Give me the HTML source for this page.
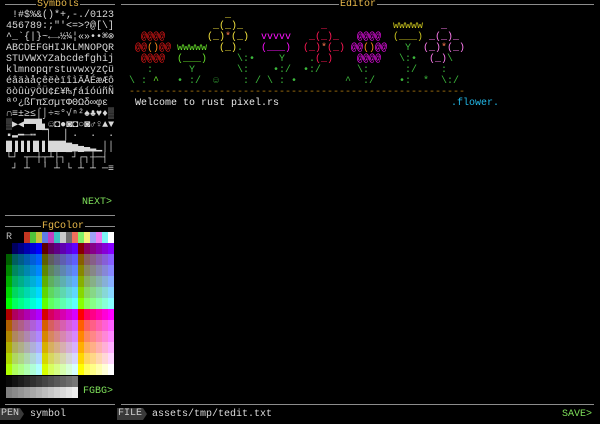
<!DOCTYPE html>
<html><head><meta charset="utf-8"><style>
html,body{margin:0;padding:0;background:#000;width:600px;height:424px;overflow:hidden;position:relative;font-family:"Liberation Mono","DejaVu Sans Mono",monospace;font-size:10px;line-height:11px;}
.a{position:absolute;white-space:pre;}
.ln{position:absolute;height:1px;background:#8c8c8c;}
.t{position:absolute;color:#e8b84a;background:#000;padding:0 1px;line-height:9px;}
.sym{color:#d8d8d8;}
.c{position:absolute;width:6px;height:11px;}
.tag{position:absolute;background:#3a3a3a;color:#cfcfcf;height:12px;line-height:12px;padding:0 1px;}
.tag:after{content:"";position:absolute;right:-4px;top:0;border-left:4px solid #3a3a3a;border-top:6px solid transparent;border-bottom:6px solid transparent;}
</style></head><body>
<!-- frame lines -->
<div class="ln" style="left:5px;top:4px;width:110px"></div>
<div class="t" style="left:36px;top:0px">Symbols</div>
<div class="ln" style="left:5px;top:215px;width:110px"></div>
<div class="ln" style="left:5px;top:226px;width:110px"></div>
<div class="t" style="left:41px;top:222px">FgColor</div>
<div class="ln" style="left:5px;top:404px;width:110px"></div>
<div class="ln" style="left:121px;top:4px;width:473px"></div>
<div class="t" style="left:339px;top:0px">Editor</div>
<div class="ln" style="left:121px;top:404px;width:473px"></div>

<!-- symbols -->
<div class="a sym" style="left:6px;top:10px"> !#$%&amp;()*+,-./0123
456789:;"'&lt;=&gt;?@[\]
^_`{|}~←→½¼¦«»••⌘⊗
ABCDEFGHIJKLMNOPQR
STUVWXYZabcdefghij
klmnopqrstuvwxyzÇü
éâäàåçêëèïîìÄÅÉæÆô
öòûùÿÖÜ¢£¥₧ƒáíóúñÑ
ªº¿ßΓπΣσµτΦΘΩδ∞φε 
∩≡±≥≤⌠⌡÷≈°√ⁿ²♠♣♥♦▒
▒▶◀▀▀█▖☺◘●◙◘○◙♂♀▲▼
▪▬━─┅ ▔▏ ▕ ·  ·  ·
█▐▐▐▐▌▌███▆▅▄▃▂▁││
└┘ ┬─┼┬┴├┐▔┘┌┐┼─┤
 ┘ ┴  ╵ ┴ └ ┴ ┴ ─≡</div>
<div class="a" style="left:82px;top:197px;color:#7ee05a">NEXT&gt;</div>

<div id="pal"></div>
<div class="a" style="left:6px;top:232px;color:#bbb">R</div>
<div class="a" style="left:83px;top:386px;color:#7ee05a">FGBG&gt;</div>

<div id="ed"></div>
<div class="a" style="left:135px;top:98px;color:#e8e8e8">Welcome to rust pixel.rs</div>
<div class="a" style="left:451px;top:98px;color:#22b8e8">.flower.</div>

<!-- bottom bar -->
<div class="tag" style="left:0;top:408px">PEN</div>
<div class="a" style="left:30px;top:409px;color:#dcdcdc">symbol</div>
<div class="tag" style="left:117px;top:408px">FILE</div>
<div class="a" style="left:152px;top:409px;color:#dcdcdc">assets/tmp/tedit.txt</div>
<div class="a" style="left:562px;top:409px;color:#7ee05a">SAVE&gt;</div>

<script>
(function(){
var p=document.getElementById('pal'),h='';
function cell(x,y,c,hh){h+='<div class="c" style="left:'+x+'px;top:'+y+'px;background:'+c+(hh?';height:'+hh+'px':'')+'"></div>';}
var s16=['#c23621','#4fc43a','#c8c23a','#5e7de6','#c23ec2','#3ec2c2','#c8c8c8','#6e6e6e','#f0705c','#80f26a','#f8f27a','#a0a0f6','#f27cf2','#7cf6f6','#ffffff'];
for(var i=0;i<15;i++)cell(24+6*i,232,s16[i]);
var L=[0,0x5f,0x87,0xaf,0xd7,0xff];
function hx(v){return ('0'+v.toString(16)).slice(-2);}
for(var r=0;r<6;r++)for(var g=0;g<6;g++)for(var b=0;b<6;b++){
 var bx=(r%3)*36,by=Math.floor(r/3)*66;
 cell(6+bx+b*6,243+by+g*11,'#'+hx(L[r])+hx(L[g])+hx(L[b]));
}
for(var k=0;k<24;k++){var v=8+10*k;cell(6+(k%12)*6,376+Math.floor(k/12)*11,'#'+hx(v)+hx(v)+hx(v));}
p.innerHTML=h;
var e=document.getElementById('ed'),o='';
function put(c,r,t,col){o+='<div class="a" style="left:'+(123+6*c)+'px;top:'+(10+11*r)+'px;color:'+col+'">'+t+'</div>';}
var R='#f01818',O='#ff8a1a',G='#3cb83c',GB='#66e02a',Y='#f2e23c',M='#ff10ff',C='#ff1855',P='#ff7cf0',OL='#c8c21e',S='#ff7a50';
// flower1
put(3,2,'@@@@',R);put(2,3,'@@',R);put(4,3,'()',O);put(6,3,'@@',R);put(3,4,'@@@@',R);put(4,5,':',G);
put(1,6,'\\ :',G);put(5,6,'^',GB);
// flower2
put(9,3,'wwwww',GB);put(9,4,'(___)',GB);put(11,5,'Y',G);put(9,6,'•',G);put(11,6,':/',G);
// flower3
put(17,0,'_',Y);put(15,1,'_(_)_',Y);put(14,2,'(_)',Y);put(17,2,'*',S);put(18,2,'(_)',Y);put(16,3,'(_)',Y);put(19,3,'.',G);
put(19,4,'\\:',G);put(21,4,'•',G);put(19,5,'\\:',G);put(15,6,'☺',G);put(20,6,':',G);put(22,6,'/',G);
// flower4
put(23,2,'vvvvv',M);put(23,3,'(___)',M);put(26,4,'Y',G);put(25,5,'•:/',G);put(24,6,'\\',G);put(26,6,':',G);put(28,6,'•',G);
// flower5
put(33,1,'_',C);put(31,2,'_(_)_',C);put(30,3,'(_)',C);put(33,3,'*',S);put(34,3,'(_)',C);put(31,4,'.',G);put(32,4,'(_)',C);
put(30,5,'•:/',G);
// flower6
put(39,2,'@@@@',M);put(38,3,'@@',M);put(40,3,'()',O);put(42,3,'@@',M);put(39,4,'@@@@',M);put(39,5,'\\:',G);
put(37,6,'^',G);put(40,6,':/',G);
// flower7
put(45,1,'wwwww',OL);put(45,2,'(___)',OL);put(47,3,'Y',G);put(46,4,'\\:•',G);put(47,5,':/',G);put(46,6,'•:',G);
// flower8
put(53,1,'_',P);put(51,2,'_(_)_',P);put(50,3,'(_)',P);put(53,3,'*',S);put(54,3,'(_)',P);put(51,4,'(_)',P);put(54,4,'\\',G);
put(53,5,':',G);put(50,6,'*',G);put(53,6,'\\:/',G);
put(1,7,'--------------------------------------------------------','#b07a10');
e.innerHTML=o;
})();
</script>
</body></html>
